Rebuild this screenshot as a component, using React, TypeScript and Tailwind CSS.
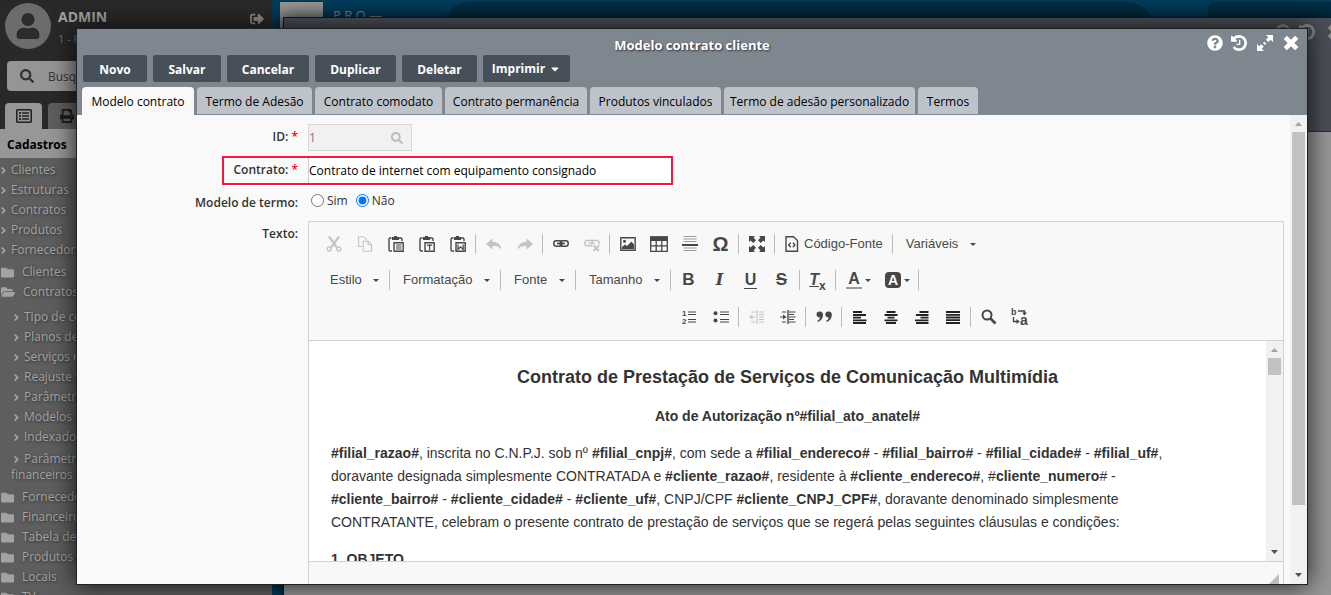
import React, { useState } from 'react';
import {
  FaAngleRight,
  FaCaretDown,
  FaFolder,
  FaFolderOpen,
  FaPrint,
  FaQuestionCircle,
  FaRegListAlt,
  FaSearch,
  FaSignOutAlt,
  FaUser,
} from 'react-icons/fa';

interface TreeItem {
  name: string;
  open?: boolean;
}

const shortcuts = ['Clientes', 'Estruturas', 'Contratos', 'Produtos', 'Fornecedor'];

const topFolders: TreeItem[] = [{ name: 'Clientes' }, { name: 'Contratos', open: true }];

const contractItems = [
  'Tipo de contrato',
  'Planos de venda',
  'Serviços extras',
  'Reajuste valores',
  'Parâmetros',
  'Modelos de contrato',
  'Indexadores',
];

const bottomFolders: TreeItem[] = [
  { name: 'Fornecedores' },
  { name: 'Financeiro' },
  { name: 'Tabela de preços' },
  { name: 'Produtos' },
  { name: 'Locais' },
  { name: 'TV' },
];

const actions = [
  { name: 'Novo', width: 'w-[64px]' },
  { name: 'Salvar', width: 'w-[68px]' },
  { name: 'Cancelar', width: 'w-[82px]' },
  { name: 'Duplicar', width: 'w-[81px]' },
  { name: 'Deletar', width: 'w-[75px]' },
];

const tabs = [
  { name: 'Modelo contrato', width: 'w-[112px]' },
  { name: 'Termo de Adesão', width: 'w-[115px]' },
  { name: 'Contrato comodato', width: 'w-[127px]' },
  { name: 'Contrato permanência', width: 'w-[142px]' },
  { name: 'Produtos vinculados', width: 'w-[131px]' },
  { name: 'Termo de adesão personalizado', width: 'w-[191px]' },
  { name: 'Termos', width: 'w-[60px]' },
];

/* ---------- window icons ---------- */

const History = () => (
  <svg viewBox="0 128 1536 1536" className="size-4" fill="currentColor">
    <path d="M1536 896q0 156-61 298t-164 245-245 164-298 61q-172 0-327-72.5t-264-204.5q-7-10-6.5-22.5t8.5-20.5l137-138q10-9 25-9 16 2 23 12 73 95 179 147t225 52q104 0 198.500-40.500t163.500-109.500 109.500-163.500 40.500-198.500-40.500-198.500-109.500-163.500-163.500-109.500-198.500-40.500q-98 0-188 35.500t-160 101.500l137 138q31 30 14 69-17 40-59 40h-448q-26 0-45-19t-19-45v-448q0-42 40-59 39-17 69 14l130 129q107-101 244.500-156.500t284.500-55.500q156 0 298 61t245 164 164 245 61 298zm-640-288v448q0 14-9 23t-23 9h-320q-14 0-23-9t-9-23v-64q0-14 9-23t23-9h224v-352q0-14 9-23t23-9h64q14 0 23 9t9 23z" />
  </svg>
);

const Expand = () => (
  <svg viewBox="0 0 16 16" className="size-4" fill="currentColor">
    <path d="M9 0h7v7l-2.300-2.300-2.400 2.400-2.400-2.400 2.400-2.400zM7 16H0V9l2.300 2.300 2-2 2.400 2.400-2 2zM7.300 6.700l2 2-1.300 1.300-2-2z" />
  </svg>
);

const Close = () => (
  <svg viewBox="0 0 16 16" className="size-4" fill="none" stroke="currentColor" strokeWidth="4.600" strokeLinejoin="round">
    <path d="M2.300 2.300l11.400 11.400M13.700 2.300L2.300 13.700" />
  </svg>
);

/* ---------- editor icons ---------- */

const Svg = ({ children }: { children: React.ReactNode }) => (
  <svg viewBox="0 0 16 16" className="size-4 shrink-0" fill="none" stroke="currentColor" strokeWidth="1.4">
    {children}
  </svg>
);

const Clipboard = ({ children }: { children: React.ReactNode }) => (
  <Svg>
    <path d="M3.5 2H2.2C1.4 2 1 2.5 1 3.2v10.6c0 .8.4 1.2 1.2 1.2H4M11 2h1.8c.8 0 1.2.4 1.2 1.2V5" />
    <path d="M4 1h2V0h3v1h2v3H4z" fill="currentColor" stroke="none" />
    <path d="M6 6.7h9.2v8.6H6z" />
    {children}
  </Svg>
);

const icons = {
  cut: (
    <Svg>
      <path d="M3 .5l7.6 10.6M13 .5L5.4 11.1" strokeWidth="2.2" />
      <circle cx="3.2" cy="13" r="2" />
      <circle cx="12.8" cy="13" r="2" />
    </Svg>
  ),
  copy: (
    <Svg>
      <path d="M5 10.5H1.6V.7h5L9.5 3.5v1" strokeWidth="1.1" />
      <path d="M6.2 5.2h5L14.5 8.5v6.8H6.2z M11 5.2v3.5h3.5" strokeWidth="1.1" />
    </Svg>
  ),
  paste: (
    <Clipboard>
      <path d="M8 9h5.5M8 11h5.5M8 13h5.5" strokeWidth="1" />
    </Clipboard>
  ),
  pasteText: (
    <Clipboard>
      <path d="M8 9.2h5.2M10.600 9v5" strokeWidth="1.2" />
    </Clipboard>
  ),
  pasteWord: (
    <Clipboard>
      <path d="M8 8.5v5l2.6-2.6 2.6 2.6v-5" strokeWidth="1.2" />
    </Clipboard>
  ),
  undo: (
    <Svg>
      <path d="M0 8l6.5-5.5v3.3c5 .2 8.5 2.8 9 7.7-2-2.7-4.8-3.7-9-3.6v3.6z" fill="currentColor" stroke="none" />
    </Svg>
  ),
  redo: (
    <Svg>
      <path d="M16 8L9.5 2.5v3.3c-5 .2-8.5 2.8-9 7.7 2-2.7 4.8-3.7 9-3.6v3.6z" fill="currentColor" stroke="none" />
    </Svg>
  ),
  link: (
    <Svg>
      <rect x=".8" y="4.8" width="8" height="5.4" rx="2.4" strokeWidth="1.5" />
      <rect x="7.2" y="4.8" width="8" height="5.4" rx="2.4" strokeWidth="1.5" />
      <path d="M4 7.5h8" strokeWidth="1.6" />
    </Svg>
  ),
  unlink: (
    <Svg>
      <path d="M8 9.700H3.200A2.200 2.200 0 0 1 .8 7.500v-.8a2.200 2.200 0 0 1 2.400-2.200h9.600a2.200 2.200 0 0 1 2.400 2.200v1.800M4 7.100h7M8 4.500v5" />
      <path d="M9.5 9.5l5.500 5.500M15 9.500L9.500 15" strokeWidth="1.8" />
    </Svg>
  ),
  image: (
    <Svg>
      <path d="M.8 1.800h14.400v12.400H.8z" />
      <circle cx="4.500" cy="5.300" r="1.500" fill="currentColor" stroke="none" />
      <path d="M2 13v-2l3-2.500 2 1.500 4.500-4.500L14 8.500V13z" fill="currentColor" stroke="none" />
    </Svg>
  ),
  table: (
    <svg viewBox="0 0 18 16" className="h-4 w-[18px] shrink-0" fill="none" stroke="currentColor" strokeWidth="1.3">
      <path d="M.7 1h16.600v14.300H.7zM.7 9.800h16.600M6.200 4v11.300M11.800 4v11.300" />
      <path d="M.7.5h16.600V5H.7z" fill="currentColor" stroke="none" />
    </svg>
  ),
  rule: (
    <Svg>
      <path d="M1.500 .5h13M1.500 3h13M1.500 5.500h13M1.500 12h13M1.500 14.500h13" stroke="#9c9c9c" strokeWidth="1.2" />
      <path d="M0 9h16" strokeWidth="2" />
    </Svg>
  ),
  maximize: (
    <Svg>
      <path d="M0 0h6L4.500 1.600 7 4.300 4.300 7 1.600 4.500 0 6zM16 0v6l-1.600-1.500L11.700 7 9 4.300l2.500-2.700L10 0zM0 16v-6l1.600 1.500L4.300 9 7 11.700l-2.500 2.700L6 16zM16 16h-6l1.500-1.600L9 11.700 11.700 9l2.700 2.500L16 10z" fill="currentColor" stroke="none" />
    </Svg>
  ),
  source: (
    <Svg>
      <path d="M2 .7h7.500L13.500 4.500v10.800H2z" />
      <path d="M6.700 6.800L4.700 9l2 2.300M8.900 6.800l2 2.200-2 2.300" />
    </Svg>
  ),
  numbered: (
    <Svg>
      <text x="0" y="7" fontSize="8" fontWeight="bold" fill="currentColor" stroke="none">1</text>
      <text x="0" y="15" fontSize="8" fontWeight="bold" fill="currentColor" stroke="none">2</text>
      <path d="M6 3h8M6 5.500h8M6 10.500h8M6 13h8" strokeWidth="1.2" />
    </Svg>
  ),
  bulleted: (
    <Svg>
      <circle cx="2.500" cy="4.200" r="2" fill="currentColor" stroke="none" />
      <circle cx="2.500" cy="11.500" r="2" fill="currentColor" stroke="none" />
      <path d="M7 3h9M7 5.500h9M7 10.500h9M7 13h9" strokeWidth="1.2" />
    </Svg>
  ),
  outdent: (
    <Svg>
      <path d="M8 1v14" strokeWidth="1.2" />
      <path d="M10 3h5M10 5.500h5M10 8h5M10 10.500h5M10 13h5M2 3h4M2 13h4M2 8h4" strokeWidth="1" />
      <path d="M0 8l3.500-2.500v5z" fill="currentColor" stroke="none" />
    </Svg>
  ),
  indent: (
    <Svg>
      <path d="M8 1v14" strokeWidth="1.4" />
      <path d="M9 3h6.500M9 5.500h5M9 8h6.500M9 10.500h5M9 13h6.500M2 3h4M2 13h4M0 8h4" strokeWidth="1.1" />
      <path d="M6.500 8L3 5.500v5z" fill="currentColor" stroke="none" />
    </Svg>
  ),
  quote: (
    <Svg>
      <path d="M3.500 2.500A3 3 0 0 1 7 5.800c0 3.400-1.800 6-5 7.200l-.7-1.200C3 11 3.900 9.800 4 8.500A3 3 0 0 1 .5 5.500a3 3 0 0 1 3-3zM12.300 2.500a3 3 0 0 1 3.500 3.300c0 3.400-1.800 6-5 7.200l-.7-1.200c1.700-.8 2.600-2 2.700-3.300a3 3 0 0 1-3.500-3 3 3 0 0 1 3-3z" fill="currentColor" stroke="none" />
    </Svg>
  ),
  left: (
    <Svg>
      <path d="M1 3h9M1 6h13M1 8.700h8M1 11.300h13.500M1 14h13" stroke="#222" strokeWidth="1.8" />
    </Svg>
  ),
  center: (
    <Svg>
      <path d="M3.500 3h9M1.500 6h13M4.500 8.700h7M1.500 11.300h13M3 14h10" stroke="#222" strokeWidth="1.8" />
    </Svg>
  ),
  right: (
    <Svg>
      <path d="M5.500 3h9M2 6h12.500M6.500 8.700h8M1 11.300h13.500M2 14h12.500" stroke="#222" strokeWidth="1.8" />
    </Svg>
  ),
  justify: (
    <Svg>
      <path d="M1 3h14M1 5.800h14M1 8.500h14M1 11.200h14M1 14h14" stroke="#222" strokeWidth="1.8" />
    </Svg>
  ),
  find: (
    <Svg>
      <circle cx="6" cy="6" r="4.500" strokeWidth="2" />
      <path d="M9.500 9.500l5 5" strokeWidth="2.600" />
    </Svg>
  ),
  replace: (
    <svg viewBox="0 0 18 18" className="size-[18px] shrink-0 overflow-visible" fill="none" stroke="currentColor" strokeWidth="1.4">
      <text x="0" y="7" fontSize="9" fontWeight="bold" fill="currentColor" stroke="none">b</text>
      <text x="9" y="17" fontSize="14" fontWeight="bold" fill="currentColor" stroke="none">a</text>
      <path d="M7 3h6.500v2M2.500 9v4.500h4" />
      <path d="M11 4.500h5l-2.500 3zM5.500 11l3.300 2.500-3.300 2.500z" fill="currentColor" stroke="none" />
    </svg>
  ),
};

const Caret = () => (
  <svg viewBox="0 0 6 3" className="h-[3px] w-1.5 shrink-0 fill-[#474747]">
    <path d="M0 0h6L3 3z" />
  </svg>
);

const Separator = () => <span className="mx-0.5 h-5 w-px bg-[#bcbcbc]" />;

const Tool = ({ label, off, children }: { label: string; off?: boolean; children: React.ReactNode }) => (
  <button
    type="button"
    aria-label={label}
    disabled={off}
    className={`flex h-7 w-[31px] shrink-0 items-center justify-center ${off ? 'text-[#c4c4c4]' : 'text-[#474747]'}`}
  >
    {children}
  </button>
);

const Combo = ({ name }: { name: string }) => (
  <label className="flex h-7 shrink-0 items-center gap-[11px] pr-2 pl-[11px]">
    <select aria-label={name} className="appearance-none text-[13px] leading-5 text-[#484848] outline-none">
      <option>{name}</option>
    </select>
    <Caret />
  </label>
);

const Toolbar = () => (
  <div className="h-[119px] border-b border-[#d1d1d1] bg-[#f8f8f8] pt-2 pl-[9px]">
    <div className="mb-2 flex h-7 items-center">
      <Tool label="Recortar" off>{icons.cut}</Tool>
      <Tool label="Copiar" off>{icons.copy}</Tool>
      <Tool label="Colar">{icons.paste}</Tool>
      <Tool label="Colar como texto">{icons.pasteText}</Tool>
      <Tool label="Colar do Word">{icons.pasteWord}</Tool>
      <Separator />
      <Tool label="Desfazer" off>{icons.undo}</Tool>
      <Tool label="Refazer" off>{icons.redo}</Tool>
      <Separator />
      <Tool label="Link">{icons.link}</Tool>
      <Tool label="Remover link" off>{icons.unlink}</Tool>
      <Separator />
      <Tool label="Imagem">{icons.image}</Tool>
      <Tool label="Tabela">{icons.table}</Tool>
      <Tool label="Linha horizontal">{icons.rule}</Tool>
      <Tool label="Caractere especial">
        <span className="text-xl leading-5 font-bold">Ω</span>
      </Tool>
      <Separator />
      <Tool label="Maximizar">{icons.maximize}</Tool>
      <Separator />
      <button type="button" className="flex h-7 items-center gap-1 px-[7px] text-[13px] text-[#484848]">
        {icons.source}
        Código-Fonte
      </button>
      <Separator />
      <Combo name="Variáveis" />
    </div>
    <div className="mb-[9px] ml-px flex h-7 items-center">
      <Combo name="Estilo" />
      <Separator />
      <Combo name="Formatação" />
      <Separator />
      <Combo name="Fonte" />
      <Separator />
      <Combo name="Tamanho" />
      <Separator />
      <Tool label="Negrito">
        <span className="text-[17px] leading-5 font-bold">B</span>
      </Tool>
      <Tool label="Itálico">
        <span className="font-['DejaVu_Serif',serif] text-base leading-5 font-bold italic">I</span>
      </Tool>
      <Tool label="Sublinhado">
        <span className="border-b border-[#474747] px-px text-base leading-4 font-bold">U</span>
      </Tool>
      <Tool label="Tachado">
        <span className="text-[17px] leading-5 font-bold line-through">S</span>
      </Tool>
      <Separator />
      <Tool label="Remover formatação">
        <span className="text-base leading-5 font-bold italic underline">T</span>
        <span className="self-end text-xs leading-4 font-bold">x</span>
      </Tool>
      <Separator />
      <button type="button" aria-label="Cor do texto" className="flex h-7 items-center gap-[3px] pr-1.5 pl-2">
        <span className="w-4 border-b-2 border-[#9c9c9c] text-center text-base leading-4 font-bold text-[#474747]">A</span>
        <Caret />
      </button>
      <button type="button" aria-label="Cor do fundo" className="flex h-7 items-center gap-[3px] pr-1.5 pl-2">
        <span className="size-4 rounded-sm bg-[#474747] text-center text-sm leading-4 font-bold text-white">A</span>
        <Caret />
      </button>
      <Separator />
    </div>
    <div className="ml-[356px] flex h-7 items-center">
      <Tool label="Lista numerada">{icons.numbered}</Tool>
      <Tool label="Lista sem números">{icons.bulleted}</Tool>
      <Separator />
      <Tool label="Diminuir recuo" off>{icons.outdent}</Tool>
      <Tool label="Aumentar recuo">{icons.indent}</Tool>
      <Separator />
      <Tool label="Citação">{icons.quote}</Tool>
      <Separator />
      <Tool label="Alinhar à esquerda">{icons.left}</Tool>
      <Tool label="Centralizar">{icons.center}</Tool>
      <Tool label="Alinhar à direita">{icons.right}</Tool>
      <Tool label="Justificado">{icons.justify}</Tool>
      <Separator />
      <Tool label="Localizar">{icons.find}</Tool>
      <Tool label="Substituir">{icons.replace}</Tool>
    </div>
  </div>
);

const Scrollbar = ({ thumb }: { thumb: string }) => (
  <div className="flex w-[17px] shrink-0 flex-col items-center bg-[#f1f1f1]">
    <svg viewBox="0 0 17 17" className="size-[17px] shrink-0 fill-[#a3a3a3]">
      <path d="M5 11h7L8.500 7z" />
    </svg>
    <div className={`w-[13px] bg-[#c1c1c1] ${thumb}`} />
    <svg viewBox="0 0 17 17" className="mt-auto size-[17px] shrink-0 fill-[#505050]">
      <path d="M5 6h7l-3.500 4z" />
    </svg>
  </div>
);

const Editor = () => (
  <div className="mr-1.5 flex-1 border border-[#d1d1d1] bg-[#f8f8f8] font-['Liberation_Sans',Arial,sans-serif]">
    <Toolbar />
    <div className="flex h-[221px] border-b border-[#d1d1d1] bg-white">
      <div className="flex-1 overflow-hidden px-[22px] pt-6 text-sm leading-[23px] text-[#333]">
        <h1 className="text-center text-lg leading-6 font-bold">
          Contrato de Prestação de Serviços de Comunicação Multimídia
        </h1>
        <p className="mt-4 text-center font-bold">Ato de Autorização nº#filial_ato_anatel#</p>
        <p className="mt-3.5">
          <b>#filial_razao#</b>, inscrita no C.N.P.J. sob nº <b>#filial_cnpj#</b>, com sede a <b>#filial_endereco#</b> -{' '}
          <b>#filial_bairro#</b> - <b>#filial_cidade#</b> - <b>#filial_uf#</b>,<br />
          doravante designada simplesmente CONTRATADA e <b>#cliente_razao#</b>, residente à{' '}
          <b>#cliente_endereco#</b>, #<b>cliente_numero</b># -<br />
          <b>#cliente_bairro#</b> - <b>#cliente_cidade#</b> - <b>#cliente_uf#</b>, CNPJ/CPF{' '}
          <b>#cliente_CNPJ_CPF#</b>, doravante denominado simplesmente
          <br />
          CONTRATANTE, celebram o presente contrato de prestação de serviços que se regerá pelas seguintes cláusulas e
          condições:
        </p>
        <p className="mt-3.5 font-bold">1. OBJETO</p>
      </div>
      <Scrollbar thumb="h-[17px]" />
    </div>
    <div className="flex justify-end px-1 pt-3">
      <svg viewBox="0 0 10 10" className="size-2.5 fill-[#bcbcbc]">
        <path d="M10 0v10H0z" />
      </svg>
    </div>
  </div>
);

const Sidebar = () => (
  <aside className="flex w-[272px] shrink-0 flex-col overflow-hidden bg-[#5e5e5e] text-xs text-[#a3a3a3]">
    <div className="shrink-0 bg-[#292929]">
      <div className="flex h-[61px] pt-[3px] pl-[5px]">
        <div className="flex size-[46px] items-center justify-center rounded-full bg-[#6c6c6c] text-[#2c2c2c]">
          <FaUser className="size-[26px]" />
        </div>
        <div className="ml-[7px] flex-1 pt-1.5">
          <p className="text-sm leading-4 font-bold text-[#a3a3a3]">ADMIN</p>
          <p className="mt-1.5 text-[11px] leading-4 text-[#707070]">1 - FILIAL</p>
        </div>
        <button type="button" aria-label="Sair" className="mr-2 h-8 text-[#8f8f8f]">
          <FaSignOutAlt className="size-3.5" />
        </button>
      </div>
      <div className="mx-[7px] flex h-[30px] items-center gap-3.5 rounded bg-[#959595] px-[13px] text-[#333]">
        <FaSearch className="size-3.5 shrink-0" />
        <input aria-label="Busque" placeholder="Busque aqui" className="w-full pt-0.5 text-xs outline-none placeholder:text-[#333]" />
      </div>
      <div className="mt-3 flex h-[26px] gap-1.5 px-[5px]">
        <button type="button" aria-label="Cadastros" className="flex w-[37px] items-center justify-center rounded-t bg-[#979797] text-[#222]">
          <FaRegListAlt className="size-4" />
        </button>
        <button type="button" aria-label="Relatórios" className="flex w-[37px] items-center justify-center rounded-t bg-[#5e5e5e] text-[#1c1c1c]">
          <FaPrint className="size-3.5" />
        </button>
      </div>
      <h2 className="h-[29px] bg-[#979797] px-[7px] text-xs leading-8 font-bold text-black">Cadastros</h2>
    </div>
    <nav className="leading-5 [text-shadow:1px_1px_3px_#333]">
      <ul className="mt-0.5">
        {shortcuts.map(name => (
          <li key={name} className="flex items-center gap-0.5">
            <FaAngleRight className="-ml-0.5 size-[11px]" />
            <a href="#">{name}</a>
          </li>
        ))}
      </ul>
      <ul className="mt-0.5">
        {topFolders.map(item => (
          <li key={item.name} className="flex items-center gap-2 pl-px">
            {item.open ? <FaFolderOpen className="size-3.5" /> : <FaFolder className="size-[13px]" />}
            <a href="#">{item.name}</a>
          </li>
        ))}
      </ul>
      <ul className="mt-[5px] mb-1 whitespace-nowrap">
        {contractItems.map(name => (
          <li key={name} className="flex items-center gap-0.5 pl-[11px]">
            <FaAngleRight className="size-[11px]" />
            <a href="#">{name}</a>
          </li>
        ))}
        <li className="mt-1 pl-[11px] leading-4">
          <FaAngleRight className="mr-0.5 inline size-[11px]" />
          <a href="#">
            Parâmetros
            <br />
            financeiros nativos
          </a>
        </li>
      </ul>
      <ul>
        {bottomFolders.map(item => (
          <li key={item.name} className="flex items-center gap-2 pl-px">
            <FaFolder className="size-[13px]" />
            <a href="#">{item.name}</a>
          </li>
        ))}
      </ul>
    </nav>
  </aside>
);

const BackWindow = () => (
  <div className="absolute inset-x-0 top-[17px] bottom-0 ml-[11px] border-t border-l border-[#15171b] bg-[#979797] shadow-[0_0_16px_rgba(0,0,0,0.7)]">
    <div className="flex h-[114px] items-start justify-end gap-2 border-b border-[#2c2f36] bg-[#4a4e57] pt-1.5 text-[#8b8b8b]">
      <FaQuestionCircle className="size-4" />
      <History />
      <span className="-mr-3 ml-1">
        <Close />
      </span>
    </div>
  </div>
);

export default function App() {
  const [tab, setTab] = useState('Modelo contrato');
  const [isTerm, setIsTerm] = useState(false);

  return (
    <div className="relative flex h-screen overflow-hidden font-['Open_Sans','Noto_Sans',sans-serif]">
      <Sidebar />

      <main className="relative flex-1 overflow-hidden bg-[#003d5c]">
        <div className="flex h-[30px] items-start pt-0.5 pl-2">
          <div className="h-7 w-[43px] bg-[#979797]" />
          <span className="ml-2.5 w-28 pt-1 text-[13px] text-[#7d929d]">P R O —</span>
          <div className="h-8 flex-1 rounded-t-3xl bg-[#002e45]" />
          <div className="ml-14 h-8 w-[123px] rounded-tl-lg bg-[#002e45]" />
        </div>
        <BackWindow />
      </main>

      {/* Contract dialog */}
      <div
        role="dialog"
        aria-label="Modelo contrato cliente"
        className="absolute top-7 right-[23px] bottom-[10px] left-[76px] flex flex-col overflow-hidden border border-[#1f2225] bg-[#f9f9f9] shadow-[0_0_24px_rgba(0,0,0,0.8)]"
      >
        <header className="shrink-0 bg-[#7e8690]">
          <div className="relative h-[26px] pt-1.5 text-center text-[13px] leading-5 font-bold text-white [text-shadow:1px_1px_2px_#333]">
            Modelo contrato cliente
            <div className="absolute top-1.5 right-2 flex items-center gap-2">
              <button type="button" aria-label="Ajuda"><FaQuestionCircle className="size-4" /></button>
              <button type="button" aria-label="Histórico"><History /></button>
              <button type="button" aria-label="Expandir" className="mx-0.5"><Expand /></button>
              <button type="button" aria-label="Fechar"><Close /></button>
            </div>
          </div>
          <div className="flex gap-1.5 pl-1.5 text-xs font-bold text-white">
            {actions.map(action => (
              <button key={action.name} type="button" className={`h-[27px] rounded-xs bg-[#475059] pt-0.5 ${action.width}`}>
                {action.name}
              </button>
            ))}
            <button type="button" className="flex h-[27px] w-[87px] items-center justify-center gap-1 rounded-xs bg-[#475059]">
              Imprimir
              <FaCaretDown className="size-3" />
            </button>
          </div>
          <div className="mt-[5px] flex gap-[3px] pl-[5px] text-xs text-black">
            {tabs.map(({ name, width }) => (
              <button
                key={name}
                type="button"
                onClick={() => setTab(name)}
                className={`rounded-t pt-0.5 whitespace-nowrap ${width} ${tab === name ? 'h-7 bg-[#f9f9f9]' : 'h-[27px] bg-[#bec3ca]'}`}
              >
                {name}
              </button>
            ))}
          </div>
        </header>

        <div className="flex min-h-0 flex-1">
          <form className="flex-1 overflow-hidden pt-[9px] text-xs text-[#333]">
            <div className="flex">
              <label htmlFor="id" className="w-[231px] pt-[5px] pr-2.5 text-right font-semibold">
                ID: <span className="text-[#f00]">*</span>
              </label>
              <div className="flex h-[27px] w-[104px] items-center border border-[#d8d8d8] bg-[#f1f1f1] pr-2 text-[#777]">
                <input id="id" defaultValue="1" disabled className="w-full" />
                <FaSearch className="size-3 shrink-0 text-[#bbb]" />
              </div>
            </div>
            <div className="mt-[5px] ml-[145px] flex h-[29px] w-[451px] border-2 border-[#f5183d]">
              <label htmlFor="contrato" className="w-[84px] pt-1 pr-2.5 text-right font-semibold">
                Contrato: <span className="text-[#f00]">*</span>
              </label>
              <input
                id="contrato"
                defaultValue="Contrato de internet com equipamento consignado"
                className="flex-1 border-l border-[#ccc] bg-white text-black outline-none"
              />
            </div>
            <fieldset className="flex h-9 pt-[7px]">
              <legend className="float-left w-[231px] pt-[3px] pr-2.5 text-right font-semibold">Modelo de termo:</legend>
              <label className="ml-[3px] flex h-[17px] items-center gap-[3px]">
                <input type="radio" name="termo" className="size-[13px]" checked={isTerm} onChange={() => setIsTerm(true)} />
                Sim
              </label>
              <label className="ml-2 flex h-[17px] items-center gap-[3px]">
                <input type="radio" name="termo" className="size-[13px]" checked={!isTerm} onChange={() => setIsTerm(false)} />
                Não
              </label>
            </fieldset>
            <div className="flex">
              <span className="w-[231px] shrink-0 pt-[5px] pr-2.5 text-right font-semibold">Texto:</span>
              <Editor />
            </div>
          </form>
          <Scrollbar thumb="h-[373px]" />
        </div>
      </div>
    </div>
  );
}
